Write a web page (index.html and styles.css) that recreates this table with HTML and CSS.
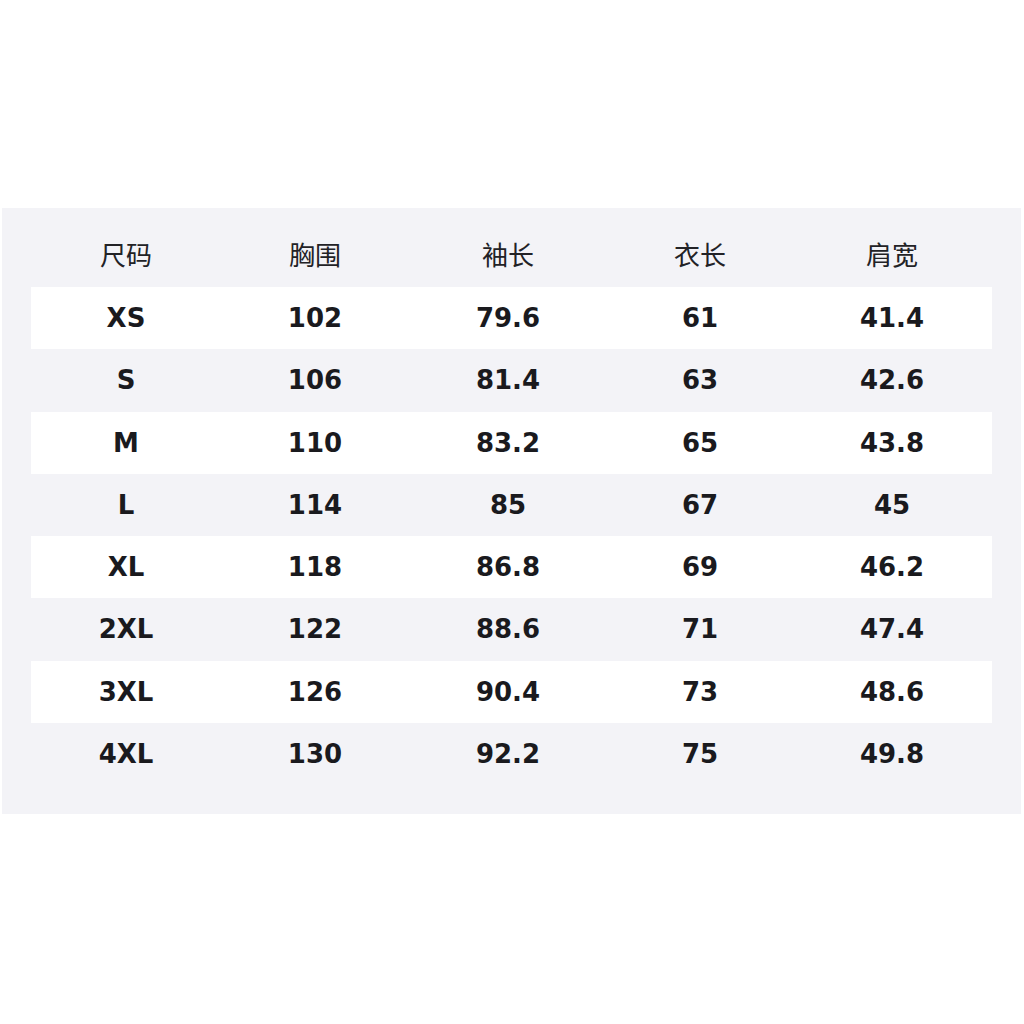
FILE: index.html
```html
<!DOCTYPE html>
<html lang="zh">
<head>
<meta charset="utf-8">
<link rel="stylesheet" href="styles.css">
</head>
<body>
<div class="page">
  <div class="panel">
    <div class="row head"><div>尺码</div><div>胸围</div><div>袖长</div><div>衣长</div><div>肩宽</div></div>
    <div class="row white"><div>XS</div><div>102</div><div>79.6</div><div>61</div><div>41.4</div></div>
    <div class="row"><div>S</div><div>106</div><div>81.4</div><div>63</div><div>42.6</div></div>
    <div class="row white"><div>M</div><div>110</div><div>83.2</div><div>65</div><div>43.8</div></div>
    <div class="row"><div>L</div><div>114</div><div>85</div><div>67</div><div>45</div></div>
    <div class="row white"><div>XL</div><div>118</div><div>86.8</div><div>69</div><div>46.2</div></div>
    <div class="row"><div>2XL</div><div>122</div><div>88.6</div><div>71</div><div>47.4</div></div>
    <div class="row white"><div>3XL</div><div>126</div><div>90.4</div><div>73</div><div>48.6</div></div>
    <div class="row"><div>4XL</div><div>130</div><div>92.2</div><div>75</div><div>49.8</div></div>
  </div>
</div>
</body>
</html>
```
FILE: styles.css
```css
html, body { margin: 0; padding: 0; background: #ffffff; }
.page { width: 1024px; height: 1024px; padding-top: 208px; box-sizing: border-box; }
.panel {
  margin-left: 2px;
  width: 1019px;
  box-sizing: border-box;
  background: #f3f3f7;
  padding: 17px 29px 29px 29px;
  font-family: "DejaVu Sans", "Noto Sans CJK SC", sans-serif;
  color: #1a1a1e;
}
.row {
  display: grid;
  grid-template-columns: 190px 188px 198px 186px 198px 1fr;
  height: 62.25px;
  align-items: center;
  text-align: center;
  font-size: 26px;
  font-weight: bold;
}
.row.white { background: #ffffff; }
.row.head {
  height: 62px;
  box-sizing: border-box;
  padding-bottom: 6px;
  font-family: "Noto Sans CJK SC", sans-serif;
  font-weight: normal;
  font-size: 26px;
  color: #222226;
}
```
